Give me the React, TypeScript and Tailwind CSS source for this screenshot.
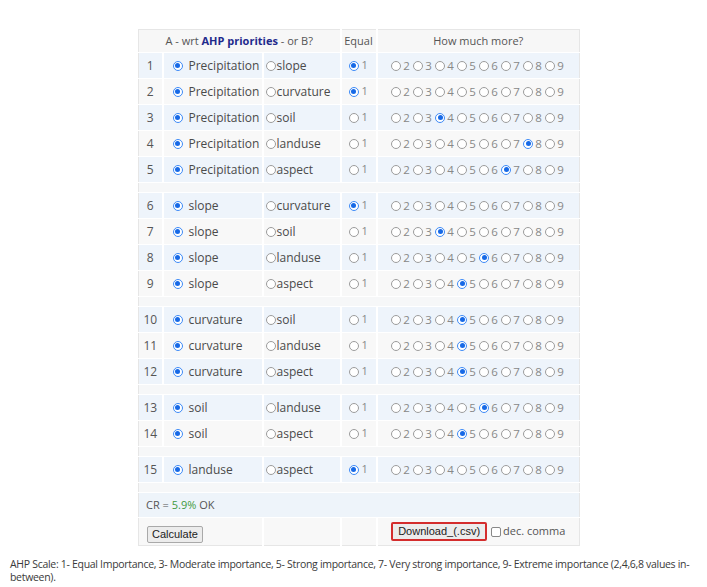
import React from "react";

type Row = { n: number; a: string; b: string; v: number };

const groups: Row[][] = [
  [
    { n: 1, a: "Precipitation", b: "slope", v: 1 },
    { n: 2, a: "Precipitation", b: "curvature", v: 1 },
    { n: 3, a: "Precipitation", b: "soil", v: 4 },
    { n: 4, a: "Precipitation", b: "landuse", v: 8 },
    { n: 5, a: "Precipitation", b: "aspect", v: 7 },
  ],
  [
    { n: 6, a: "slope", b: "curvature", v: 1 },
    { n: 7, a: "slope", b: "soil", v: 4 },
    { n: 8, a: "slope", b: "landuse", v: 6 },
    { n: 9, a: "slope", b: "aspect", v: 5 },
  ],
  [
    { n: 10, a: "curvature", b: "soil", v: 5 },
    { n: 11, a: "curvature", b: "landuse", v: 5 },
    { n: 12, a: "curvature", b: "aspect", v: 5 },
  ],
  [
    { n: 13, a: "soil", b: "landuse", v: 6 },
    { n: 14, a: "soil", b: "aspect", v: 5 },
  ],
  [{ n: 15, a: "landuse", b: "aspect", v: 1 }],
];

// radio button look-alike
function Radio({ on }: { on: boolean }) {
  if (on)
    return (
      <span className="inline-flex items-center justify-center w-[10px] h-[10px] rounded-full border-[1.5px] border-[#3d8af7] bg-white shrink-0">
        <span className="w-[5px] h-[5px] rounded-full bg-[#1769e6]" />
      </span>
    );
  return <span className="inline-block w-[10px] h-[10px] rounded-full border-[1.5px] border-[#9c9c9c] bg-white shrink-0" />;
}

const td = "border-l-2 border-t border-white first:border-l-0 p-0";

function PairRow({ r, i }: { r: Row; i: number }) {
  const bg = i % 2 === 0 ? "bg-[#eef4fb]" : "bg-[#f8f8f8]";
  return (
    <tr className={`${bg} h-[26px]`}>
      <td className={`${td} text-center text-[12px] text-[#555]`}>{r.n}</td>
      <td className={td}>
        <div className="flex items-center pl-[9px] gap-[6px] text-[12px] text-[#4a4a4a]">
          <Radio on />
          <span>{r.a}</span>
        </div>
      </td>
      <td className={td}>
        <div className="flex items-center pl-[2px] gap-[1px] text-[12px] text-[#4a4a4a]">
          <Radio on={false} />
          <span>{r.b}</span>
        </div>
      </td>
      <td className={td}>
        <div className="flex items-center pl-[7px] gap-[3px] text-[11px] text-[#888]">
          <Radio on={r.v === 1} />
          <span>1</span>
        </div>
      </td>
      <td className={td}>
        <div className="flex items-center justify-center pl-[2px] text-[11.5px] text-[#888]">
          {[2, 3, 4, 5, 6, 7, 8, 9].map((k) => (
            <span key={k} className="flex items-center gap-[2px] w-[22px]">
              <Radio on={r.v === k} />
              <span>{k}</span>
            </span>
          ))}
        </div>
      </td>
    </tr>
  );
}

function Spacer() {
  return (
    <tr className="h-[10px] bg-[#f6f7f8]">
      <td colSpan={5} className="border-t border-white p-0" />
    </tr>
  );
}

export default function App() {
  return (
    <div className="w-[707px] h-[587px] bg-white pt-[29px] font-['Open_Sans',sans-serif]">
      <table className="ml-[138px] w-[441px] table-fixed border-collapse border border-[#e6e6e6]">
        <colgroup>
          <col className="w-[24px]" />
          <col className="w-[100px]" />
          <col className="w-[78px]" />
          <col className="w-[36px]" />
          <col className="w-[203px]" />
        </colgroup>
        <tbody>
          <tr className="h-[23px] bg-[#f7f7f7] text-[11px] text-[#555]">
            <td colSpan={3} className="text-center p-0">
              A - wrt <span className="font-bold text-[#1f2a8c]">AHP priorities</span> - or B?
            </td>
            <td className="border-l-2 border-white text-center p-0">Equal</td>
            <td className="border-l-2 border-white text-center p-0">How much more?</td>
          </tr>
          {groups.map((g, gi) => (
            <React.Fragment key={gi}>
              {gi > 0 && <Spacer />}
              {g.map((r, i) => (
                <PairRow key={r.n} r={r} i={i} />
              ))}
            </React.Fragment>
          ))}
          <Spacer />
          <tr className="h-[25px] bg-[#eef4fa]">
            <td colSpan={5} className="border-t border-white pl-[7px] text-[11px] text-[#555]">
              CR = <span className="text-[#3f9a3f]">5.9%</span> OK
            </td>
          </tr>
          <tr className="h-[28px] bg-[#f8f8f8]">
            <td colSpan={2} className={`${td} pl-[8px]`}>
              <button className="h-[17px] px-[4px] text-[11px] leading-none font-['Liberation_Sans',sans-serif] text-[#222] bg-[#ececec] border border-[#a9a9a9] rounded-[2px]">
                Calculate
              </button>
            </td>
            <td className={td} />
            <td className={td} />
            <td className={td}>
              <div className="flex items-center justify-center gap-[4px]">
                <button className="h-[19px] px-[5px] text-[11px] leading-none font-['Liberation_Sans',sans-serif] text-[#222] bg-[#ececec] border-2 border-[#d42d2d] rounded-[2px]">
                  Download_(.csv)
                </button>
                <span className="flex items-center gap-[2px] text-[11px] text-[#555]">
                  <span className="inline-block w-[10px] h-[10px] border border-[#888] rounded-[2px] bg-white" />
                  dec. comma
                </span>
              </div>
            </td>
          </tr>
        </tbody>
      </table>
      <p className="mt-[12px] ml-[10px] w-[697px] text-[10.5px] leading-[13px] tracking-[-0.3px] text-[#3a3a3a]">
        AHP Scale: 1- Equal Importance, 3- Moderate importance, 5- Strong importance, 7- Very strong importance, 9- Extreme importance (2,4,6,8 values in-between).
      </p>
    </div>
  );
}
